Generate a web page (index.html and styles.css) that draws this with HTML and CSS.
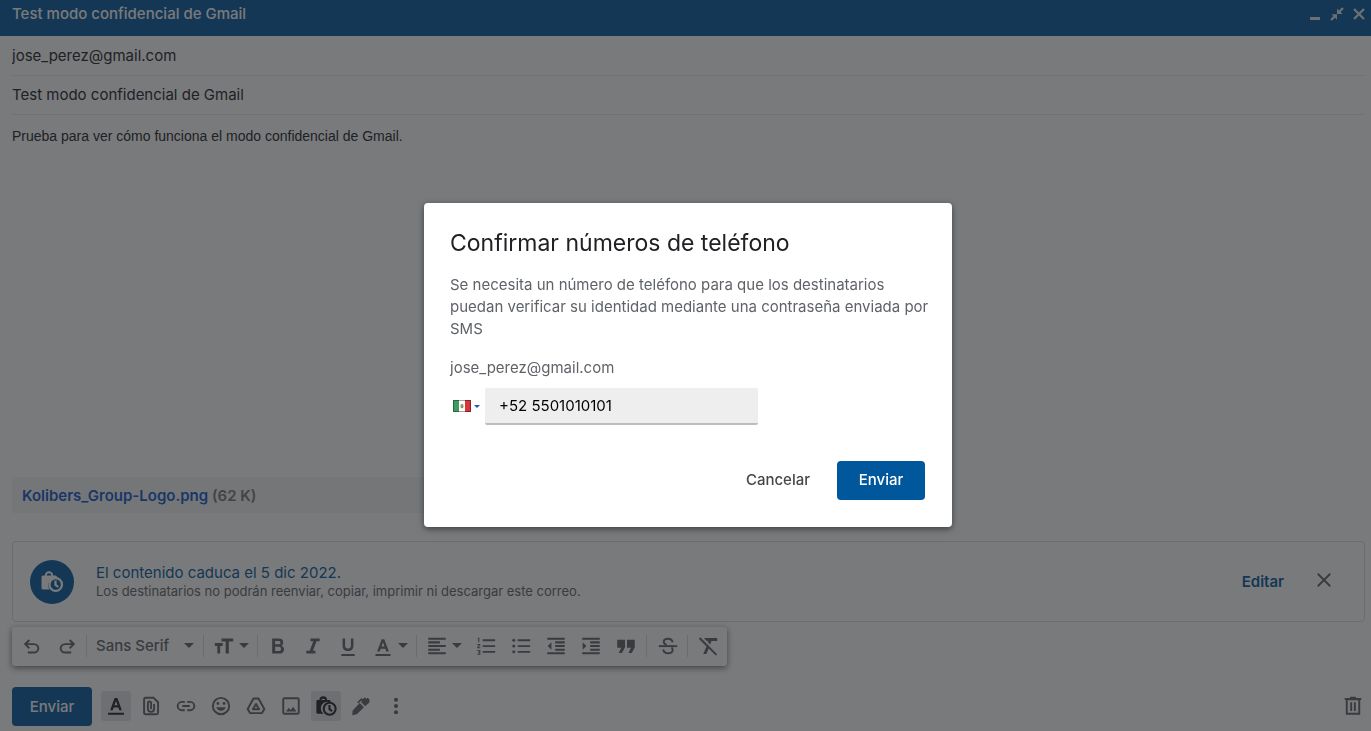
FILE: index.html
```html
<!DOCTYPE html>
<html lang="es">
<head>
<meta charset="utf-8">
<title>Test modo confidencial de Gmail</title>
<link rel="stylesheet" href="styles.css">
</head>
<body>
<main class="compose">
  <header class="compose-header">
    <h1 class="compose-title">Test modo confidencial de Gmail</h1>
    <div class="window-controls">
      <button class="window-button" type="button" aria-label="Minimizar"><svg viewBox="0 0 14 14"><path d="M2 10h10v3H2z"/></svg></button>
      <button class="window-button" type="button" aria-label="Reducir"><svg viewBox="0 0 14 14"><path d="M7 1.500 8.900 3.400 12.200.2l1.600 1.600-3.300 3.200L12.600 7H7zM1.400 7.200H7v5.600L5 10.700 1.800 13.800.2 12.200 3.400 9.100z"/></svg></button>
      <button class="window-button" type="button" aria-label="Cerrar"><svg viewBox="0 0 14 14"><path class="line" d="m2 2 10 10m0-10-10 10"/></svg></button>
    </div>
  </header>

  <div class="compose-body">
    <input class="field" type="text" aria-label="Para" value="jose_perez@gmail.com">
    <input class="field subject" type="text" aria-label="Asunto" value="Test modo confidencial de Gmail">
    <textarea class="message" aria-label="Mensaje">Prueba para ver cómo funciona el modo confidencial de Gmail.</textarea>

    <div class="attachment"><a class="attachment-name" href="#">Kolibers_Group-Logo.png</a> <span class="attachment-size">(62 K)</span></div>

    <section class="expiry">
      <span class="expiry-badge"><svg viewBox="0 0 24 24"><path fill-rule="evenodd" d="M3 5.500h1.800a4.200 4.200 0 0 1 8.400 0h2.300A1.500 1.500 0 0 1 17 7v1.500A7 7 0 0 0 9.600 19.500H3A1.500 1.500 0 0 1 1.500 18V7A1.500 1.500 0 0 1 3 5.500Zm3.700 0h4.600a2.300 2.300 0 0 0-4.600 0Z"/><circle class="line" cx="15.700" cy="14.500" r="6.300"/><path class="line" d="M15.500 10.500v4.500l2.800 1.900"/></svg></span>
      <div class="expiry-text">
        <p class="expiry-title">El contenido caduca el 5 dic 2022.</p>
        <p class="expiry-note">Los destinatarios no podrán reenviar, copiar, imprimir ni descargar este correo.</p>
      </div>
      <button class="expiry-edit" type="button">Editar</button>
      <button class="expiry-close" type="button" aria-label="Quitar"><svg viewBox="0 0 24 24"><path class="line" d="m4.500 4.500 15 15m0-15-15 15"/></svg></button>
    </section>

    <div class="format-bar" role="toolbar" aria-label="Formato">
      <button class="tool" type="button" aria-label="Deshacer"><svg viewBox="0 0 24 24"><path d="M7 21v-2.300h7.300q1.700 0 3-1.100t1.200-2.800-1.200-2.800-3-1.100H6.500l3 3L8 15.500 2.200 9.700 8 4l1.600 1.600-3 3h7.700q2.700 0 4.600 1.800t1.900 4.400-1.900 4.400-4.600 1.800Z"/></svg></button>
      <button class="tool" type="button" aria-label="Rehacer"><svg viewBox="0 0 24 24"><path transform="matrix(-1 0 0 1 24 0)" d="M7 21v-2.300h7.300q1.700 0 3-1.100t1.200-2.800-1.200-2.800-3-1.100H6.500l3 3L8 15.500 2.200 9.700 8 4l1.600 1.600-3 3h7.700q2.700 0 4.600 1.800t1.900 4.400-1.900 4.400-4.600 1.800Z"/></svg></button>
      <span class="divider"></span>
      <button class="tool-font" type="button"><span>Sans Serif</span><i class="caret"></i></button>
      <span class="divider"></span>
      <button class="tool-menu" type="button" aria-label="Tamaño"><svg viewBox="0 0 24 24"><path d="M9 3h14v3.500h-5.200V21H14V6.500H9zM1 8.500h9.500V12H7.400v9H4v-9H1z"/></svg><i class="caret"></i></button>
      <span class="divider"></span>
      <button class="tool" type="button" aria-label="Negrita"><svg viewBox="0 0 24 24"><path fill-rule="evenodd" d="M5 3h8c3.300 0 5.300 2 5.300 4.700 0 1.700-.9 3.100-2.200 3.900 1.900.7 3.200 2.400 3.200 4.500 0 3.200-2.500 5-5.700 5H5Zm3.600 3v4H13c1.200 0 2-.9 2-2s-.8-2-2-2Zm0 7v5h4.700c1.400 0 2.300-1.100 2.300-2.500S14.700 13 13.300 13Z"/></svg></button>
      <button class="tool" type="button" aria-label="Cursiva"><svg viewBox="0 0 24 24"><path d="M9 3h11v3.200h-3.700l-4.400 11.600H15V21H4v-3.200h4L12.400 6.200H9z"/></svg></button>
      <button class="tool" type="button" aria-label="Subrayado"><svg viewBox="0 0 24 24"><path d="M4 21.500h16V24H4zM5.500 3h3v8.500c0 2.200 1.300 3.700 3.500 3.700s3.500-1.500 3.500-3.700V3h3v8.600c0 4-2.600 6.500-6.500 6.500s-6.500-2.500-6.500-6.500Z"/></svg></button>
      <button class="tool-menu" type="button" aria-label="Color del texto"><svg viewBox="0 0 24 24"><path fill-rule="evenodd" d="M3 21.500h18V24H3zM10.500 4h3l5.600 14.500H16l-1.200-3.300H9.200L8 18.500H4.900Zm-.4 8.700h3.800L12 7.400Z"/></svg><i class="caret"></i></button>
      <span class="divider"></span>
      <button class="tool-menu" type="button" aria-label="Alinear"><svg viewBox="0 0 24 24"><path d="M1.500 2h21v2.500h-21zm0 4.400h14v2.500h-14zm0 4.400h21v2.500h-21zm0 4.400h14v2.500h-14zm0 4.400h21V22h-21z"/></svg><i class="caret"></i></button>
      <button class="tool" type="button" aria-label="Lista numerada"><svg viewBox="0 0 24 24"><path d="M8 4h15v2.200H8zm0 7h15v2.200H8zm0 7h15v2.200H8zM2 2h2v5.500H2.700V3.200H2zm-.5 7.500h3.700v1.300L3 13.500h2.200v1.300H1.400v-1.300l2.300-2.700H1.500zm0 7.200h3.700v5.800H1.500v-1.200h2.400V20H2.500v-1h1.400v-1.100H1.500z"/></svg></button>
      <button class="tool" type="button" aria-label="Lista con viñetas"><svg viewBox="0 0 24 24"><path d="M8 4h15v2.200H8zm0 7h15v2.200H8zm0 7h15v2.200H8z"/><circle cx="3.300" cy="5" r="1.800"/><circle cx="3.300" cy="12" r="1.800"/><circle cx="3.300" cy="19" r="1.800"/></svg></button>
      <button class="tool" type="button" aria-label="Menos sangría"><svg viewBox="0 0 24 24"><path d="M1.500 2h21v2.500h-21zM11 6.400h11.500v2.500H11zm0 4.400h11.500v2.500H11zm0 4.400h11.500v2.500H11zm-9.500 4.400h21V22h-21zM6.500 7.500v9L2 12z"/></svg></button>
      <button class="tool" type="button" aria-label="Más sangría"><svg viewBox="0 0 24 24"><path d="M1.500 2h21v2.500h-21zM11 6.400h11.500v2.500H11zm0 4.400h11.500v2.500H11zm0 4.400h11.500v2.500H11zm-9.500 4.400h21V22h-21zM2 7.500v9L6.500 12z"/></svg></button>
      <button class="tool" type="button" aria-label="Cita"><svg viewBox="0 0 24 24"><path d="M1.500 4.500h9.300v9l-3.600 7H3.300l3-6.500H1.500zM13.200 4.500h9.300v9l-3.600 7H15l3-6.500h-4.800z"/></svg></button>
      <span class="divider divider-wide"></span>
      <button class="tool" type="button" aria-label="Tachado"><svg viewBox="0 0 24 24"><path d="M1 11h22v2.300H1z"/><path class="line" d="M17.500 7.500C17 4.700 15 3.300 12.100 3.300 9 3.300 6.900 4.800 6.900 7c0 1.800 1.200 3 3.500 3.800m5.700 2.900c1 .7 1.500 1.600 1.500 2.800 0 2.500-2.200 4.200-5.500 4.200-3.200 0-5.400-1.600-5.800-4.700"/></svg></button>
      <span class="divider"></span>
      <button class="tool" type="button" aria-label="Quitar formato"><svg viewBox="0 0 24 24"><path d="M7 2.500h16V6h-6.700l-1.800 4.200-2.700-2.600.7-1.600h-2zM2.700 1.500 23 21.800 21.300 23.500l-8.500-8.400-2.800 6.400H6.300l3.900-9L1 3.200z"/></svg></button>
    </div>

    <div class="send-bar">
      <button class="send" type="button">Enviar</button>
      <button class="action active" type="button" aria-label="Opciones de formato"><svg viewBox="0 0 24 24"><path fill-rule="evenodd" d="M2.500 20h19v2.500h-19zM10.300 2.500h3.400L19 17h-3l-1.200-3.300H9.200L8 17H5Zm-.2 8.700h3.800L12 5.900Z"/></svg></button>
      <button class="action" type="button" aria-label="Adjuntar archivos"><svg viewBox="0 0 24 24"><path class="line" d="M5.500 2h9.500l5.500 5.500V20a1.800 1.800 0 0 1-1.800 1.800H5.500A1.800 1.800 0 0 1 3.700 20V3.800A1.800 1.800 0 0 1 5.500 2Z"/><path class="line" d="M8.300 8.500v6.800a3.700 3.700 0 0 0 7.400 0V9.500m-7.400-1a1.900 1.900 0 0 1 3.800 0v7"/></svg></button>
      <button class="action" type="button" aria-label="Insertar enlace"><svg viewBox="0 0 24 24"><path class="line" d="M10.500 7H7a5 5 0 0 0 0 10h3.500m3-10H17a5 5 0 0 1 0 10h-3.500M7.500 12h9"/></svg></button>
      <button class="action" type="button" aria-label="Insertar emoji"><svg viewBox="0 0 24 24"><circle class="line" cx="12" cy="12" r="9.800"/><circle cx="8.300" cy="9" r="1.700"/><circle cx="15.700" cy="9" r="1.700"/><path d="M6.300 13.500h11.400a6 6 0 0 1-11.400 0Z"/></svg></button>
      <button class="action" type="button" aria-label="Insertar desde Drive"><svg viewBox="0 0 24 24"><path class="line" stroke-linejoin="round" d="M9 3h6l7 12.500-2.800 5H4.800l-2.800-5ZM12 9.500l3.700 6.300H8.300Z"/></svg></button>
      <button class="action" type="button" aria-label="Insertar foto"><svg viewBox="0 0 24 24"><rect class="line" x="2.700" y="2.700" width="18.600" height="18.600" rx="1.500"/><path d="m6 18.500 3.300-4.500 2.300 2.800 3-3.800L18.500 18.500z"/></svg></button>
      <button class="action active" type="button" aria-label="Modo confidencial"><svg class="large" viewBox="0 0 24 24"><path fill-rule="evenodd" d="M3 5.500h1.800a4.200 4.200 0 0 1 8.400 0h2.300A1.500 1.500 0 0 1 17 7v1.500A7 7 0 0 0 9.600 20.500H3A1.500 1.500 0 0 1 1.500 19V7A1.500 1.500 0 0 1 3 5.500Zm3.900 0h4.200a2.200 2.200 0 0 0-4.200 0Z"/><circle class="line" cx="16" cy="15" r="6.500"/><path class="line" d="M15.800 10.800v4.700l2.900 2"/></svg></button>
      <button class="action" type="button" aria-label="Insertar firma"><svg viewBox="0 0 24 24"><path d="M10.500 8.500 15.500 13.500 7 22l-5.500 1L2 17.500zM7.500 7.500l5-5 1.500 1.500L15.500 2.500c.7-.7 1.500-.7 2.100-.1l.9.900L20 2l2.700 2.700-1 1.200c.7.700.7 1.500 0 2.200l-4.700 4.200-5-5 1.200-1.200-.8-.8-3.600 3.600z"/></svg></button>
      <button class="action" type="button" aria-label="Más opciones"><svg viewBox="0 0 24 24"><circle cx="12" cy="4.500" r="2.500"/><circle cx="12" cy="12" r="2.500"/><circle cx="12" cy="19.500" r="2.500"/></svg></button>
      <button class="action discard" type="button" aria-label="Descartar borrador"><svg viewBox="0 0 24 24"><path class="line" d="M4.500 4h15v17.200h-15zM2 3.500h20M8.500 2h7M9.800 7.500v10.500m4.400-10.500v10.500"/></svg></button>
    </div>
  </div>
</main>

<div class="scrim">
  <form class="dialog" role="dialog" aria-modal="true" aria-labelledby="dialog-title">
    <h2 class="dialog-title" id="dialog-title">Confirmar números de teléfono</h2>
    <p class="dialog-text">Se necesita un número de teléfono para que los destinatarios puedan verificar su identidad mediante una contraseña enviada por SMS</p>
    <label class="dialog-label" for="phone">jose_perez@gmail.com</label>
    <div class="phone-row">
      <button class="country" type="button" aria-label="México">
        <svg class="flag" viewBox="0 0 18 12"><path fill="#fff" d="M0 0h18v12H0z"/><path fill="#3f9b62" d="M0 0h6v12H0z"/><path fill="#d8353a" d="M12 0h6v12h-6z"/><path fill="none" stroke="#000" stroke-opacity=".35" d="M.5.5h17v11H.5z"/><ellipse cx="9" cy="6" rx="1.600" ry="2.200" fill="#a39a78"/><path fill="#6d8a58" d="M7.500 6.500h3L9 8.500z"/></svg>
        <i class="caret caret-small"></i>
      </button>
      <input class="phone" id="phone" type="tel" value="+52 5501010101">
    </div>
    <div class="dialog-actions">
      <button class="cancel" type="button">Cancelar</button>
      <button class="confirm" type="button">Enviar</button>
    </div>
  </form>
</div>
</body>
</html>
```
FILE: styles.css
```css
* {
  box-sizing: border-box;
}

body {
  margin: 0;
  background: #fff;
  color: #202124;
  font: 15px/22px Inter, sans-serif;
}

h1,
h2,
p {
  margin: 0;
}

button,
input,
textarea {
  margin: 0;
  padding: 0;
  border: 0;
  background: none;
  color: inherit;
  font: inherit;
}

svg {
  display: block;
  flex: none;
  width: 20px;
  height: 20px;
  fill: currentColor;
}

.line {
  fill: none;
  stroke: currentColor;
  stroke-width: 2.300;
}

.compose {
  display: flex;
  flex-direction: column;
  min-height: 100vh;
}

.compose-header {
  display: flex;
  justify-content: space-between;
  align-items: center;
  height: 36px;
  padding: 0 5px 8px 12px;
  background: #01579b;
  color: #fff;
}

.compose-title {
  font-size: 15px;
  font-weight: 500;
}

.window-controls {
  display: flex;
  gap: 8px;
  opacity: .85;
}

.window-button svg {
  width: 14px;
  height: 14px;
}

.compose-body {
  display: flex;
  flex: 1;
  flex-direction: column;
  padding: 0 6px 5px 12px;
}

.field {
  height: 40px;
  border-bottom: 1px solid #e8eaed;
}

.subject {
  height: 39px;
  padding-bottom: 2px;
}

.message {
  flex: 1;
  min-height: 100px;
  padding-top: 10px;
  resize: none;
  font-family: "Liberation Sans", Arial, sans-serif;
  font-size: 14px;
}

.attachment {
  max-width: 448px;
  margin-bottom: 28px;
  padding: 8px 10px 6px;
  background: #f5f5f5;
  font-weight: 600;
}

.attachment-name {
  color: #15c;
  text-decoration: none;
}

.attachment-size {
  color: #777;
}

.expiry {
  display: flex;
  align-items: center;
  min-height: 81px;
  margin-bottom: 5px;
  padding: 0 30px 0 17px;
  border: 1px solid #dadce0;
  border-radius: 4px;
}

.expiry-badge {
  display: grid;
  flex: none;
  place-items: center;
  width: 44px;
  height: 44px;
  border-radius: 50%;
  background: #01579b;
  color: #fff;
}

.expiry-badge svg {
  width: 24px;
  height: 24px;
}

.expiry-text {
  flex: 1;
  margin-left: 22px;
  line-height: 18px;
}

.expiry-title {
  color: #01579b;
}

.expiry-note {
  color: #5f6368;
  font-size: 13px;
}

.expiry-edit {
  margin-right: 30px;
  color: #01579b;
  font-weight: 600;
}

.expiry-close {
  padding-bottom: 3px;
  color: #5f6368;
}

.format-bar {
  display: flex;
  align-items: center;
  align-self: flex-start;
  height: 39px;
  margin-bottom: 21px;
  padding: 0 2px 2px;
  border-radius: 3px;
  box-shadow: 0 2px 6px rgba(0, 0, 0, .55);
  color: #5f6368;
}

.format-bar svg {
  width: 20px;
  height: 20px;
}

.tool {
  display: grid;
  place-items: center;
  width: 35px;
  height: 35px;
}

.tool-menu {
  display: flex;
  align-items: center;
  gap: 5px;
  width: 49px;
  height: 35px;
  padding-left: 8px;
}

.tool-font {
  display: flex;
  align-items: center;
  justify-content: space-between;
  width: 112px;
  padding: 0 7px;
  font-weight: 500;
}

.divider {
  width: 1px;
  height: 22px;
  margin: 0 2px;
  background: #dadce0;
}

.divider-wide {
  margin: 0 3px;
}

.caret {
  flex: none;
  border: 5px solid transparent;
  border-top-color: currentColor;
  border-bottom: 0;
}

.caret-small {
  border-width: 3px;
  border-bottom: 0;
}

.send-bar {
  display: flex;
  align-items: center;
  gap: 5px;
}

.send {
  width: 80px;
  height: 39px;
  margin-right: 4px;
  border-radius: 4px;
  background: #01579b;
  color: #fff;
  font-weight: 500;
}

.action {
  display: grid;
  place-items: center;
  width: 30px;
  height: 30px;
  margin-bottom: 2px;
  border-radius: 3px;
  color: #5f6368;
}

.action svg {
  width: 20px;
  height: 20px;
}

.action .large {
  width: 22px;
  height: 22px;
}

.active {
  background: #e3e4e6;
  color: #202124;
}

.discard {
  margin-right: -3px;
  margin-left: auto;
}

.scrim {
  position: fixed;
  inset: 0;
  display: grid;
  place-items: center;
  padding: 0 0 2px 5px;
  background: rgba(32, 33, 36, .6);
}

.dialog {
  width: 100%;
  max-width: 528px;
  padding: 24px 15px 27px 26px;
  border-radius: 4px;
  background: #fff;
  box-shadow: 0 2px 6px rgba(0, 0, 0, .5);
  color: #5f6368;
}

.dialog-title {
  margin-bottom: 15px;
  color: #202124;
  font-size: 23px;
  font-weight: 400;
  line-height: 32px;
}

.dialog-label {
  display: block;
  margin: 17px 0 9px;
}

.phone-row {
  display: flex;
  align-items: center;
  margin-bottom: 36px;
}

.country {
  display: flex;
  align-items: center;
  gap: 3px;
  width: 35px;
  padding-left: 3px;
  color: #1a56c4;
}

.flag {
  width: 18px;
  height: 12px;
}

.phone {
  width: 273px;
  height: 37px;
  padding: 0 14px;
  border-bottom: 2px solid #bdbdbd;
  border-radius: 2px;
  background: #eee;
  color: #000;
}

.dialog-actions {
  display: flex;
  justify-content: flex-end;
  gap: 19px;
  padding-right: 12px;
  font-weight: 500;
}

.cancel {
  padding: 0 8px;
  color: #444746;
}

.confirm {
  width: 88px;
  height: 39px;
  border-radius: 4px;
  background: #01579b;
  color: #fff;
}
```
